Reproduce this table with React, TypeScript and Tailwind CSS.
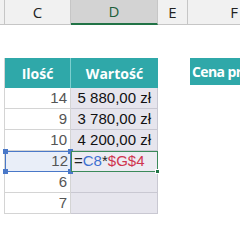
const rows = [
  { qty: '14', value: '5 880,00 zł' },
  { qty: '9', value: '3 780,00 zł' },
  { qty: '10', value: '4 200,00 zł' },
];

function Handle({ className }: { className: string }) {
  return <span className={`absolute w-[5px] h-[5px] bg-[#4a78c8] ${className}`} />;
}

export default function App() {
  return (
    <div className="w-[240px] h-[240px] overflow-hidden bg-white font-['Liberation_Sans',sans-serif]">
      {/* Column headers */}
      <div className="grid grid-cols-[5px_66px_87px_30px_52px] h-[22px] text-[15px] text-[#222] font-['Open_Sans',sans-serif]">
        <div className="bg-[#f1f1f1] border-r border-b border-[#c6c6c6]" />
        <div className="bg-[#f1f1f1] border-r border-b border-[#c6c6c6] flex items-center justify-center">C</div>
        <div className="bg-[#d3d3d3] border-r border-[#c6c6c6] border-b-2 border-b-[#217346] flex items-center justify-center text-[#1d5f3b]">D</div>
        <div className="bg-[#f1f1f1] border-r border-b border-[#c6c6c6] flex items-center justify-center">E</div>
        <div className="bg-[#f1f1f1] border-b border-[#c6c6c6] flex items-center justify-end pr-[2px]">F</div>
      </div>

      {/* Sheet body */}
      <div className="grid grid-cols-[5px_66px_87px_30px_52px] grid-rows-[36px_30px_21px_21px_21px_21px_21px_21px] font-['Liberation_Sans',sans-serif]">
        {/* blank rows */}
        <div className="col-span-5" />

        {/* table header */}
        <div className="border-r border-[#d4d4d4]" />
        <div className="bg-[#2fa8a9] border-r border-[#7ccfcf] flex items-center justify-center text-white font-bold text-[14px] font-['Open_Sans',sans-serif]">Ilość</div>
        <div className="bg-[#2fa8a9] flex items-center justify-center text-white font-bold text-[14px] font-['Open_Sans',sans-serif]">Wartość</div>
        <div />
        <div className="bg-[#2fa8a9] ml-[2px] mb-[3px] flex items-center pl-[2px] text-white font-bold text-[14px] tracking-[-0.6px] whitespace-nowrap overflow-hidden font-['Open_Sans',sans-serif]">Cena pro</div>

        {rows.map((r) => (
          <div key={r.qty} className="contents">
            <div className="border-r border-[#d4d4d4]" />
            <div className="border-b border-r border-[#d4d4d4] flex items-center justify-end pr-[3px] text-[15px] text-[#555]">{r.qty}</div>
            <div className="bg-[#e6e5ed] border-b border-r border-[#c9c8d2] flex items-center justify-end pr-[6px] text-[15px] text-[#111] whitespace-nowrap">{r.value}</div>
            <div />
            <div />
          </div>
        ))}

        {/* active row */}
        <div className="border-r border-[#d4d4d4]" />
        <div className="relative bg-[#e9eef8] border-[1.5px] border-[#4a78c8] flex items-center justify-end pr-[2px] text-[15px] text-[#555]">
          12
          <Handle className="-left-[3px] -top-[3px]" />
          <Handle className="-right-[3px] -top-[3px]" />
          <Handle className="-left-[3px] -bottom-[3px]" />
          <Handle className="-right-[3px] -bottom-[3px]" />
        </div>
        <div className="relative bg-[#ecebf2] border-[1.5px] border-[#3b8a5a] flex items-center pl-[2px] text-[15px] whitespace-nowrap">
          <span className="text-[#222]">=</span>
          <span className="text-[#3e6fd0]">C8</span>
          <span className="text-[#222]">*</span>
          <span className="text-[#d0344f]">$G$4</span>
          <span className="absolute -right-[3px] -bottom-[3px] w-[5px] h-[5px] bg-[#217346] border border-white" />
        </div>
        <div />
        <div />

        {['6', '7'].map((q) => (
          <div key={q} className="contents">
            <div className="border-r border-[#d4d4d4]" />
            <div className="border-b border-r border-[#d4d4d4] flex items-center justify-end pr-[3px] text-[15px] text-[#555]">{q}</div>
            <div className="bg-[#e6e5ed] border-b border-r border-[#c9c8d2]" />
            <div />
            <div />
          </div>
        ))}
      </div>
    </div>
  );
}
